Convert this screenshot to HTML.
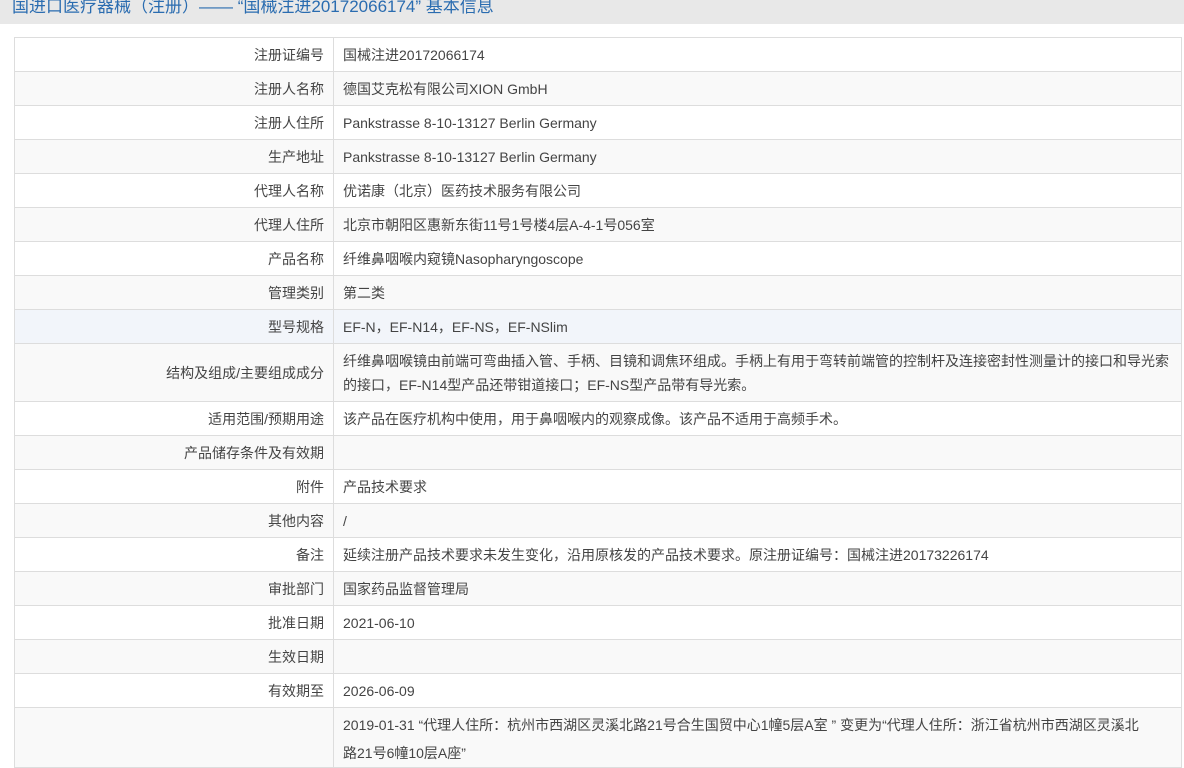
<!DOCTYPE html>
<html><head><meta charset="utf-8"><style>
body{margin:0;background:#fff;font-family:"Liberation Sans","Noto Sans CJK SC",sans-serif;width:1184px;height:746px;overflow:hidden}
.hd{height:24px;background:#e8e8e8;color:#2a6cb0;font-size:17px;line-height:14px;padding-left:12px;overflow:hidden;white-space:nowrap}
table{position:absolute;left:14px;top:37px;width:1168px;border-collapse:collapse;font-size:14px;color:#444}
td{border:1px solid #ddd;height:34px;padding:0 9px;line-height:24px;box-sizing:border-box}
td.l{width:319px;text-align:right}
tr:nth-child(even) td{background:#f9f9f9}
tr.h td{background:#f2f5fa}
</style></head><body>
<div class="hd">国进口医疗器械（注册）—— “国械注进20172066174” 基本信息</div>
<table>
<tr><td class="l">注册证编号</td><td>国械注进20172066174</td></tr>
<tr><td class="l">注册人名称</td><td>德国艾克松有限公司XION GmbH</td></tr>
<tr><td class="l">注册人住所</td><td>Pankstrasse 8-10-13127 Berlin Germany</td></tr>
<tr><td class="l">生产地址</td><td>Pankstrasse 8-10-13127 Berlin Germany</td></tr>
<tr><td class="l">代理人名称</td><td>优诺康（北京）医药技术服务有限公司</td></tr>
<tr><td class="l">代理人住所</td><td>北京市朝阳区惠新东街11号1号楼4层A-4-1号056室</td></tr>
<tr><td class="l">产品名称</td><td>纤维鼻咽喉内窥镜Nasopharyngoscope</td></tr>
<tr><td class="l">管理类别</td><td>第二类</td></tr>
<tr class="h"><td class="l">型号规格</td><td>EF-N，EF-N14，EF-NS，EF-NSlim</td></tr>
<tr><td class="l" style="height:58px">结构及组成/主要组成成分</td><td>纤维鼻咽喉镜由前端可弯曲插入管、手柄、目镜和调焦环组成。手柄上有用于弯转前端管的控制杆及连接密封性测量计的接口和导光索的接口，EF-N14型产品还带钳道接口；EF-NS型产品带有导光索。</td></tr>
<tr><td class="l">适用范围/预期用途</td><td>该产品在医疗机构中使用，用于鼻咽喉内的观察成像。该产品不适用于高频手术。</td></tr>
<tr><td class="l">产品储存条件及有效期</td><td></td></tr>
<tr><td class="l">附件</td><td>产品技术要求</td></tr>
<tr><td class="l">其他内容</td><td>/</td></tr>
<tr><td class="l">备注</td><td>延续注册产品技术要求未发生变化，沿用原核发的产品技术要求。原注册证编号：国械注进20173226174</td></tr>
<tr><td class="l">审批部门</td><td>国家药品监督管理局</td></tr>
<tr><td class="l">批准日期</td><td>2021-06-10</td></tr>
<tr><td class="l">生效日期</td><td></td></tr>
<tr><td class="l">有效期至</td><td>2026-06-09</td></tr>
<tr><td class="l" style="height:60px"></td><td style="vertical-align:top;padding-top:3px;padding-right:40px;line-height:28px">2019-01-31 “代理人住所：杭州市西湖区灵溪北路21号合生国贸中心1幢5层A室 ” 变更为“代理人住所：浙江省杭州市西湖区灵溪北路21号6幢10层A座”</td></tr>
</table>
</body></html>
